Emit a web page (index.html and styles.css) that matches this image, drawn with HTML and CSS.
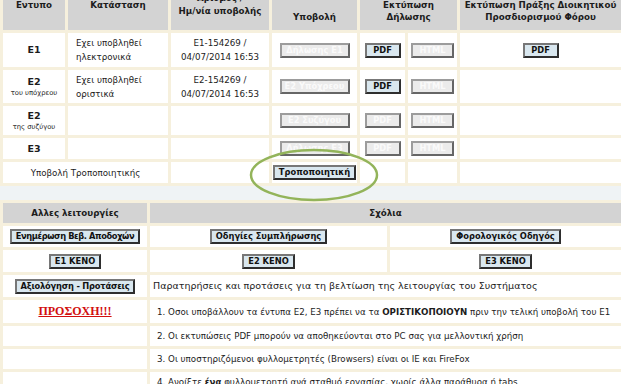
FILE: index.html
```html
<!DOCTYPE html>
<html>
<head>
  <meta charset="utf-8">
  <title>Υποβολή Δηλώσεων</title>
  <link rel="stylesheet" href="styles.css">
</head>
<body>
<div class="page">

  <table class="forms">
    <colgroup>
      <col class="c-form"><col class="c-state"><col class="c-num"><col class="c-submit"><col class="c-pdf"><col class="c-html"><col>
    </colgroup>
    <tr class="head">
      <th>Εντυπο<br>&nbsp;</th>
      <th>Κατάσταση<br>&nbsp;</th>
      <th>Αριθμός /<br>Ημ/νία υποβολής<br>&nbsp;</th>
      <th>&nbsp;<br>Υποβολή</th>
      <th colspan="2">Εκτύπωση<br>Δήλωσης</th>
      <th>Εκτύπωση Πράξης Διοικητικού<br>Προσδιορισμού Φόρου</th>
    </tr>
    <tr class="r-e1">
      <td><b class="code">E1</b></td>
      <td class="state">Εχει υποβληθεί<br>ηλεκτρονικά</td>
      <td class="num">E1-154269 /<br>04/07/2014 16:53</td>
      <td><button class="btn wide" disabled>Δήλωσης Ε1</button></td>
      <td><button class="btn pdf">PDF</button></td>
      <td><button class="btn html" disabled>HTML</button></td>
      <td><button class="btn pdf">PDF</button></td>
    </tr>
    <tr class="r-e2">
      <td><b class="code">E2</b><br><span class="who">του υπόχρεου</span></td>
      <td class="state">Εχει υποβληθεί<br>οριστικά</td>
      <td class="num">E2-154269 /<br>04/07/2014 16:53</td>
      <td><button class="btn wide" disabled>E2 Υπόχρεου</button></td>
      <td><button class="btn pdf">PDF</button></td>
      <td><button class="btn html" disabled>HTML</button></td>
      <td></td>
    </tr>
    <tr class="r-e2b">
      <td><b class="code">E2</b><br><span class="who">της συζύγου</span></td>
      <td></td>
      <td></td>
      <td><button class="btn wide" disabled>E2 Συζύγου</button></td>
      <td><button class="btn pdf" disabled>PDF</button></td>
      <td><button class="btn html" disabled>HTML</button></td>
      <td></td>
    </tr>
    <tr class="r-low">
      <td><b class="code">E3</b></td>
      <td></td>
      <td></td>
      <td><button class="btn wide" disabled>Δήλωσης Ε3</button></td>
      <td><button class="btn pdf" disabled>PDF</button></td>
      <td><button class="btn html" disabled>HTML</button></td>
      <td></td>
    </tr>
    <tr class="r-low">
      <td colspan="2">Υποβολή Τροποποιητικής</td>
      <td></td>
      <td><button class="btn">Τροποποιητική</button></td>
      <td></td>
      <td></td>
      <td></td>
    </tr>
  </table>

  <!-- κύκλος γύρω από την τροποποιητική -->
  <svg class="mark" width="132" height="56" viewBox="0 0 132 56">
    <ellipse cx="66" cy="28" rx="63" ry="25" fill="none" stroke="#93b45a" stroke-width="2.5"/>
  </svg>

  <table class="notes">
    <colgroup>
      <col class="c-other"><col class="c-mid"><col>
    </colgroup>
    <tr class="r-head">
      <th>Αλλες λειτουργίες</th>
      <th colspan="2">Σχόλια</th>
    </tr>
    <tr class="r-btn">
      <td><button class="btn tight">Ενημέρωση Βεβ. Αποδοχών</button></td>
      <td><button class="btn">Οδηγίες Συμπλήρωσης</button></td>
      <td><button class="btn">Φορολογικός Οδηγός</button></td>
    </tr>
    <tr class="r-btn2">
      <td><button class="btn">E1 KENO</button></td>
      <td><button class="btn">E2 KENO</button></td>
      <td><button class="btn">E3 KENO</button></td>
    </tr>
    <tr class="r-btn2">
      <td><button class="btn semi">Αξιολόγηση - Προτάσεις</button></td>
      <td colspan="2" class="text big">Παρατηρήσεις και προτάσεις για τη βελτίωση της λειτουργίας του Συστήματος</td>
    </tr>
    <tr class="r-alert">
      <td><span class="alert">ΠΡΟΣΟΧΗ!!!</span></td>
      <td colspan="2" class="text">1. Οσοι υποβάλλουν τα έντυπα Ε2, Ε3 πρέπει να τα <b>ΟΡΙΣΤΙΚΟΠΟΙΟΥΝ</b> πριν την τελική υποβολή του Ε1</td>
    </tr>
    <tr class="r-text">
      <td></td>
      <td colspan="2" class="text">2. Οι εκτυπώσεις PDF μπορούν να αποθηκεύονται στο PC σας για μελλοντική χρήση</td>
    </tr>
    <tr class="r-text">
      <td></td>
      <td colspan="2" class="text">3. Οι υποστηριζόμενοι φυλλομετρητές (Browsers) είναι οι IE και FireFox</td>
    </tr>
    <tr class="r-text">
      <td></td>
      <td colspan="2" class="text">4. Ανοίξτε <b>ένα</b> φυλλομετρητή ανά σταθμό εργασίας, χωρίς άλλα παράθυρα ή tabs</td>
    </tr>
  </table>

</div>
</body>
</html>
```

FILE: styles.css
```css
/* Βασικά */
html, body {
  margin: 0;
  overflow: hidden;
}

body {
  background-color: #eff3f5;
  font-family: "DejaVu Sans", sans-serif;
  font-size: 8.7px;
  color: #1c1c1c;
}

.page {
  position: relative;
}

/* Πίνακες */
table {
  width: 624px;
  table-layout: fixed;
  border-spacing: 3px;
  background-color: #f6f0dd;
}

th, td {
  padding: 0;
  text-align: center;
  vertical-align: middle;
  background-color: #fff;
  line-height: 14px;
}

th {
  background-color: #d3d3d3;
  font-weight: bold;
}

/* Πάνω πίνακας: εντυπα */
.forms {
  margin-top: -11px;
}

.c-form { width: 62px; }
.c-state { width: 100px; }
.c-num { width: 98px; }
.c-submit { width: 85px; }
.c-pdf { width: 45px; }
.c-html { width: 49px; }

.forms .head th {
  height: 38px;
  line-height: 12.5px;
}

.r-e1 { height: 34px; }
.r-e2 { height: 33px; }
.r-e2b { height: 29px; }
.r-low { height: 21px; }

td.state {
  text-align: left;
  padding-left: 8px;
}

.code {
  font-size: 9.5px;
  line-height: 11px;
}

.who {
  font-size: 6.8px;
  line-height: 9px;
}

.forms .r-e2 td:first-child,
.forms .r-e2b td:first-child {
  line-height: 10px;
}

/* Κουμπιά */
.btn {
  font-family: "DejaVu Sans", sans-serif;
  font-size: 8.3px;
  font-weight: bold;
  line-height: 11px;
  height: 15px;
  padding: 0 4px;
  border: 2px solid;
  border-color: #777 #2e2e2e #2e2e2e #777;
  background-color: #d9e7ef;
  color: #111;
  vertical-align: middle;
  white-space: nowrap;
  overflow: hidden;
}

.btn:disabled {
  background-color: #ebebeb;
  color: #fafafa;
  border-color: #9c9c9c #666 #666 #9c9c9c;
}

.btn.wide { width: 70px; padding: 0; }
.btn.pdf { width: 36px; padding: 0; }
.btn.html { width: 43px; padding: 0; }
.btn.tight { letter-spacing: -0.4px; }
.btn.semi { letter-spacing: -0.2px; }

.mark {
  position: absolute;
  left: 248px;
  top: 158px;
}

/* Κάτω πίνακας: λειτουργίες και σχόλια */
.notes {
  margin-top: 14px;
}

.c-other { width: 144px; }
.c-mid { width: 237px; }

.r-head { height: 20px; }
.r-btn { height: 21px; }
.r-btn2 { height: 22px; }
.r-alert { height: 23px; }
.r-text { height: 20px; }

td.text {
  text-align: left;
  padding-left: 7px;
}

td.text.big {
  font-size: 9.5px;
  padding-left: 3px;
}

.alert {
  font-family: "Liberation Serif", serif;
  font-size: 12px;
  font-weight: bold;
  color: #d20f0f;
  text-decoration: underline;
}
```
